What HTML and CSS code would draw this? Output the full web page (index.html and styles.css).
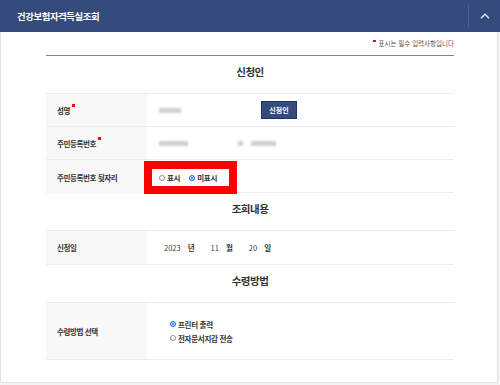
FILE: index.html
```html
<!DOCTYPE html>
<html lang="ko">
<head>
    <meta charset="UTF-8">
    <meta name="viewport" content="width=device-width, initial-scale=1.0">
    <title>건강보험자격득실조회</title>
    <link rel="stylesheet" href="styles.css">
</head>
<body>

<div class="header">
    <h1 class="header-title">건강보험자격득실조회</h1>
    <button class="header-toggle" type="button">
        <svg width="10" height="6" viewBox="0 0 10 6"><polyline points="1,5.2 5,1.2 9,5.2" fill="none" stroke="#e4e8f2" stroke-width="1.4"/></svg>
    </button>
</div>

<div class="panel">
    <p class="note"><span class="req"></span>표시는 필수 입력사항입니다</p>

    <h2 class="section-title">신청인</h2>
    <div class="form-table">
        <div class="form-row">
            <div class="form-label">성명<span class="req req-label"></span></div>
            <div class="form-value">
                <span class="blur blur-name"></span>
                <button class="btn-apply" type="button">신청인</button>
            </div>
        </div>
        <div class="form-row">
            <div class="form-label">주민등록번호<span class="req req-label"></span></div>
            <div class="form-value">
                <span class="blur blur-front"></span>
                <span class="blur blur-dash"></span>
                <span class="blur blur-back"></span>
            </div>
        </div>
        <div class="form-row">
            <div class="form-label">주민등록번호 뒷자리</div>
            <div class="form-value">
                <div class="mark-box">
                    <label class="radio"><span class="radio-dot"></span>표시</label>
                    <label class="radio"><span class="radio-dot checked"></span>미표시</label>
                </div>
            </div>
        </div>
    </div>

    <h2 class="section-title">조회내용</h2>
    <div class="form-table">
        <div class="form-row row-date">
            <div class="form-label">신청일</div>
            <div class="form-value date">
                <span class="num">2023</span><span class="unit">년</span>
                <span class="num">11</span><span class="unit">월</span>
                <span class="num">20</span><span class="unit">일</span>
            </div>
        </div>
    </div>

    <h2 class="section-title">수령방법</h2>
    <div class="form-table">
        <div class="form-row row-receive">
            <div class="form-label">수령방법 선택</div>
            <div class="form-value">
                <div class="radio-list">
                    <label class="radio"><span class="radio-dot checked"></span>프린터 출력</label>
                    <label class="radio"><span class="radio-dot"></span>전자문서지갑 전송</label>
                </div>
            </div>
        </div>
    </div>
</div>

</body>
</html>
```

FILE: styles.css
```css
body {
    margin: 0;
    background: #f3f3f3;
    font-family: "Noto Sans CJK KR", "Noto Sans", sans-serif;
    color: #333;
}

/* 상단 제목 바 */
.header {
    display: flex;
    align-items: center;
    height: 32px;
    background: #354b7b;
}

.header-title {
    flex: 1;
    margin: 0;
    padding-left: 17px;
    font-size: 9.4px;
    font-weight: bold;
    letter-spacing: -0.4px;
    color: #fff;
}

.header-toggle {
    display: flex;
    align-items: center;
    justify-content: center;
    width: 32px;
    height: 22px;
    padding: 0;
    border: 0;
    border-left: 1px solid #4c6191;
    background: none;
}

/* 본문 패널 */
.panel {
    width: 498px;
    box-sizing: border-box;
    padding: 0 43px 22px 45px;
    background: #fff;
    border: 1px solid #e2e2e2;
    border-top: 0;
}

.note {
    margin: 0;
    padding: 7px 0 8px;
    line-height: 8px;
    text-align: right;
    font-size: 6.5px;
    color: #555;
    border-bottom: 1px solid #80879a;
}

.req {
    display: inline-block;
    width: 2.5px;
    height: 2.5px;
    margin-right: 3px;
    vertical-align: 4px;
    background: #f00;
}

.req-label {
    align-self: flex-start;
    margin: 10px 0 0 2px;
}

.section-title {
    margin: 0;
    padding: 9px 0 14px;
    line-height: 14px;
    text-align: center;
    font-size: 10.5px;
    font-weight: bold;
    letter-spacing: -0.5px;
    color: #333;
}

/* 입력 표 */
.form-table {
    border-bottom: 1px solid #ececec;
}

.form-row {
    display: grid;
    grid-template-columns: 101px 1fr;
    height: 32px;
    border-top: 1px solid #ececec;
}

.row-date {
    height: 33px;
}

.row-receive {
    height: 56px;
}

.form-label {
    display: flex;
    align-items: center;
    padding-left: 11px;
    background: #f8f8f8;
    font-size: 7.5px;
    font-weight: bold;
    letter-spacing: -0.4px;
    color: #333;
}

.form-value {
    display: flex;
    align-items: center;
    padding-left: 12px;
    font-size: 7.5px;
}

/* 개인정보 가림 */
.blur {
    display: inline-block;
    height: 5px;
    background: #d0d0d0;
    filter: blur(1px);
}

.blur-name { width: 22px; }
.blur-front { width: 29px; }
.blur-dash { width: 5px; margin-left: 50px; }
.blur-back { width: 25px; margin-left: 8px; }

.btn-apply {
    width: 36px;
    height: 18px;
    margin-left: 80px;
    padding: 0;
    background: #354b7b;
    border: 1px solid #22345d;
    color: #fff;
    font-family: inherit;
    font-size: 7px;
    font-weight: bold;
}

/* 라디오 (빨간 강조 상자) */
.mark-box {
    display: flex;
    align-items: center;
    gap: 9px;
    width: 70px;
    height: 17px;
    margin: 1px 0 0 -15px;
    align-self: flex-start;
    padding-left: 7px;
    border: 8px solid #ff0000;
    background: #fff;
}

.radio {
    display: flex;
    align-items: center;
    font-size: 7.5px;
    font-weight: bold;
    letter-spacing: -0.3px;
    color: #333;
}

.radio-dot {
    width: 4px;
    height: 4px;
    margin-right: 2px;
    border: 1px solid #8a8a8a;
    border-radius: 50%;
    background: #fff;
}

.radio-dot.checked {
    border-color: #1a73e8;
    background: #1a73e8;
    box-shadow: inset 0 0 0 1px #fff;
}

.radio-list {
    display: flex;
    flex-direction: column;
    gap: 3px;
    margin-left: 11px;
}

/* 신청일 */
.date {
    padding-left: 17px;
}

.date .num {
    color: #444;
}

.date .unit {
    margin: 0 16px 0 7px;
    font-weight: bold;
}
```
